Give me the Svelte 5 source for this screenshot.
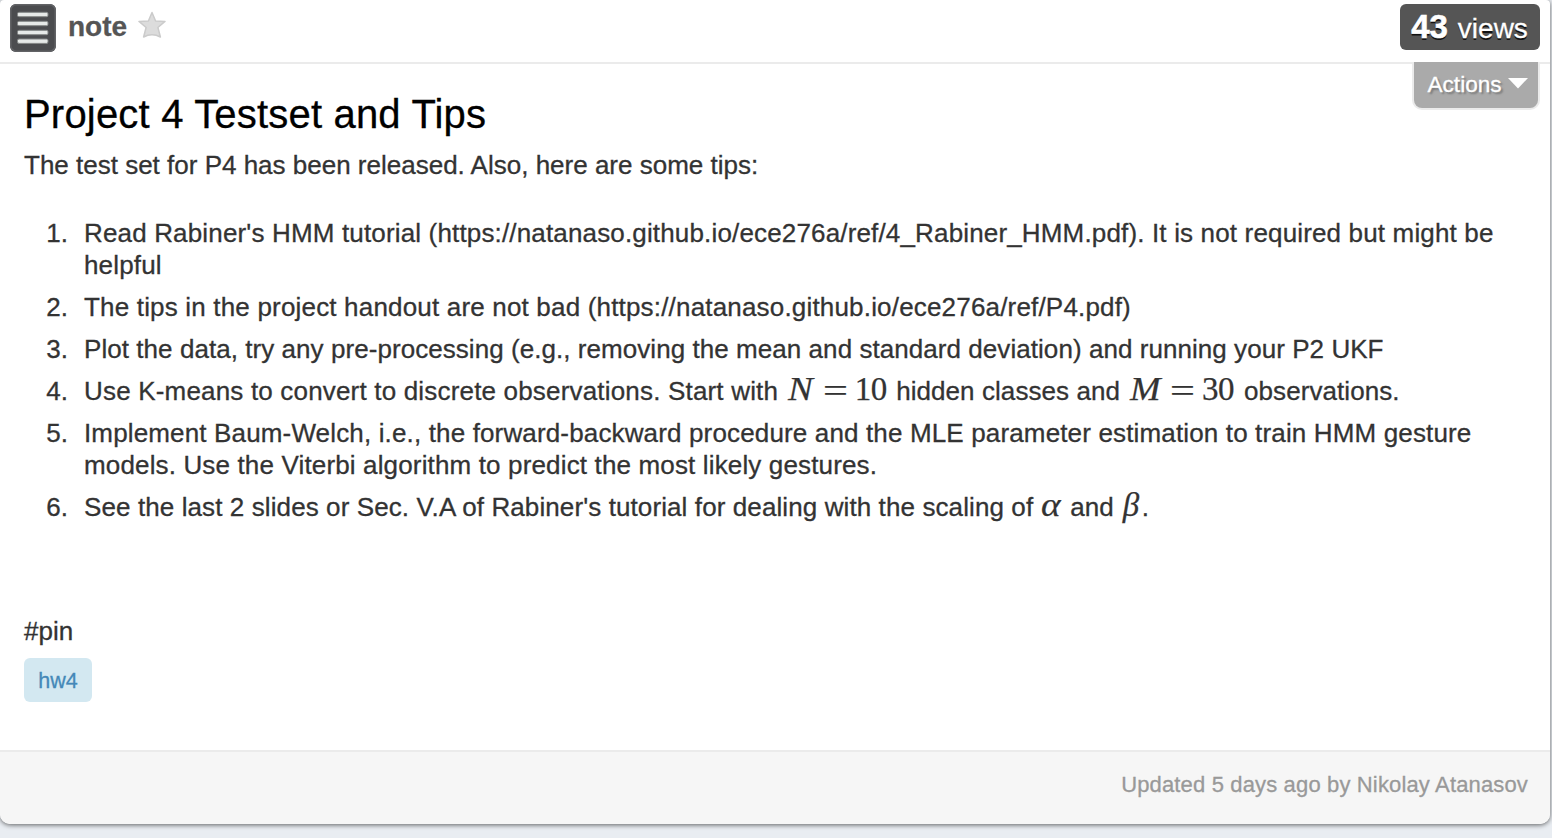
<script>
  const tips = [
    ["Read Rabiner's HMM tutorial (https://natanaso.github.io/ece276a/ref/4_Rabiner_HMM.pdf). It is not required but might be", 'helpful'],
    ['The tips in the project handout are not bad (https://natanaso.github.io/ece276a/ref/P4.pdf)'],
    ['Plot the data, try any pre-processing (e.g., removing the mean and standard deviation) and running your P2 UKF'],
    null,
    ['Implement Baum-Welch, i.e., the forward-backward procedure and the MLE parameter estimation to train HMM gesture', 'models. Use the Viterbi algorithm to predict the most likely gestures.'],
    null
  ];
</script>

<article class="card">
  <header>
    <svg class="note-icon" width="46" height="48" viewBox="0 0 46 48">
      <rect width="46" height="48" rx="6" fill="#4b4c4f" />
      <rect x=".75" y=".75" width="44.5" height="46.5" rx="5.5" fill="none" stroke="#626366" stroke-width="1.5" />
      <g fill="#e6e9e8" stroke="#838686" stroke-width="1">
        <rect x="7.5" y="8.3" width="30.5" height="4.4" rx="1.5" />
        <rect x="7.5" y="17.3" width="30.5" height="4.4" rx="1.5" />
        <rect x="7.5" y="26.3" width="30.5" height="4.4" rx="1.5" />
        <rect x="7.5" y="35" width="30.5" height="4.4" rx="1.5" />
      </g>
    </svg>
    <span class="kind">note</span>
    <svg class="star" width="28" height="28" viewBox="0 0 28 28">
      <path d="M14 1.5 17.6 10 27 10.4 19.9 16.5 22.4 26 Q14 21.5 5.6 26 L8.1 16.5 1 10.4 10.4 10Z" fill="#dcdcdc" stroke="#cbcbcb" stroke-width="1.5" stroke-linejoin="round" />
    </svg>
    <div class="views"><b>43</b><span>views</span></div>
  </header>

  <main>
    <button class="actions"><span>Actions</span><svg width="20" height="11" viewBox="0 0 20 11"><path d="M0 0H20L10 10.5Z" fill="#fff" /></svg></button>
    <h1>Project 4 Testset and Tips</h1>
    <p class="intro">The test set for P4 has been released. Also, here are some tips:</p>
    <ol>
      {#each tips as tip, i}
        <li class="t{i + 1}">
          <span class="num">{i + 1}.</span>
          <div>
            {#if i === 3}
              <span class="line"><span>Use K-means to convert to discrete observations. Start with</span><span class="math n"><i>N</i><em>=</em><span>10</span></span><span class="plain">hidden classes and</span><span class="math m"><i>M</i><em>=</em><span>30</span></span><span class="plain">observations.</span></span>
            {:else if i === 5}
              <span class="line"><span>See the last 2 slides or Sec. V.A of Rabiner's tutorial for dealing with the scaling of</span><span class="math a"><i>α</i></span><span class="plain">and</span><span class="math b"><i>β</i></span><span>.</span></span>
            {:else}
              {#each tip as line}<span class="line">{line}</span>{/each}
            {/if}
          </div>
        </li>
      {/each}
    </ol>
    <p class="pin">#pin</p>
    <span class="tag">hw4</span>
  </main>

  <footer>Updated 5 days ago by Nikolay Atanasov</footer>
</article>

<style>
  :global(body) {
    background: #e9edf2;
    height: 838px;
    overflow: hidden;
    font-family: "Liberation Sans", Arial, sans-serif;
    -webkit-text-stroke: .3px currentColor;
  }
  .card {
    box-sizing: border-box;
    width: 1550px;
    height: 824px;
    background: #fff;
    border-radius: 4px 4px 10px 10px;
    box-shadow: 0 1px 5px rgba(0, 0, 0, .6);
    display: flex;
    flex-direction: column;
    overflow: hidden;
    color: #333;
  }
  header {
    box-sizing: border-box;
    height: 64px;
    flex: none;
    border-bottom: 2px solid #ebebeb;
    display: flex;
    align-items: flex-start;
    padding: 4px 10px;
  }
  .kind {
    font-weight: 700;
    font-size: 28px;
    line-height: 32px;
    margin: 7px 0 0 12px;
    color: #555;
    letter-spacing: 0;
  }
  .star { margin: 7px 0 0 11px; }
  .views {
    margin-left: auto;
    box-sizing: border-box;
    width: 140px;
    height: 46px;
    border-radius: 6px;
    background: #555;
    color: #fff;
    display: flex;
    justify-content: center;
    align-items: baseline;
    gap: 10px;
    font-size: 28px;
    line-height: 46px;
    text-shadow: 0 2px 0 #111;
    white-space: nowrap;
    padding-right: 1px;
  }
  .views b { font-size: 33px; -webkit-text-stroke-width: .6px; }
  main {
    flex: none;
    height: 686px;
    padding: 0 24px;
    position: relative;
  }
  .actions {
    position: absolute;
    top: -2px;
    left: 1412px;
    box-sizing: border-box;
    width: 128px;
    height: 48px;
    border: 2px solid #ebebeb;
    border-top: 0;
    border-radius: 0 0 10px 10px;
    background: #aaa;
    color: #fff;
    font: 22.6px/44px "Liberation Sans", Arial, sans-serif;
    padding: 0 10px 1px 13.5px;
    display: flex;
    justify-content: space-between;
    align-items: center;
    text-shadow: 2px 2px 2px #777;
  }
  .actions svg { margin: 0 0 2px; }
  h1 {
    margin: 0;
    padding-top: 26px;
    font-weight: 400;
    font-size: 40px;
    line-height: 48px;
    color: #000;
    white-space: nowrap;
    letter-spacing: .19px;
  }
  p { margin: 0; font-size: 26px; line-height: 32px; }
  .intro { padding-top: 11px; }
  ol { list-style: none; margin: 36px 0 0; padding: 0; }
  li {
    display: flex;
    font-size: 26px;
    line-height: 32px;
    margin-bottom: 10px;
  }
  .t1 .line { letter-spacing: .157px; }
  .t2 .line { letter-spacing: .18px; }
  .t3 .line { letter-spacing: .055px; }
  .t4 .line { letter-spacing: .18px; }
  .t5 .line { letter-spacing: .148px; }
  .t6 .line { letter-spacing: .1px; }
  .line .plain { letter-spacing: .07px; }
  .num { width: 44px; margin-right: 16px; text-align: right; }
  .line { display: flex; align-items: baseline; white-space: pre; height: 32px; }
  .math {
    display: flex;
    align-items: baseline;
    box-sizing: border-box;
    font-family: "Liberation Serif", "Times New Roman", serif;
    font-size: 33px;
    line-height: 28px;
    height: 28px;
    letter-spacing: -.5px;
    -webkit-text-stroke-width: .25px;
  }
  .math i, .math em { display: block; transform-origin: 0 50%; }
  .math em { font-style: normal; transform: translateY(2px) scaleX(1.34); }
  .n, .m { justify-content: flex-start; }
  .n { width: 118px; padding-left: 9.5px; }
  .m { width: 124px; padding-left: 10px; }
  .n i { width: 35px; transform: scaleX(1.13); }
  .m i { width: 40px; transform: scaleX(1.11); }
  .n em, .m em { width: 32px; }
  .a { width: 37px; padding-left: 7.5px; }
  .b { width: 28px; padding-left: 9px; }
  .a i { transform: scaleX(1.13); }
  .pin { padding-top: 82px; }
  .tag {
    display: block;
    width: 68px;
    height: 44px;
    margin-top: 11px;
    border-radius: 6px;
    background: #d3e8f1;
    color: #4488b8;
    font-size: 21.5px;
    line-height: 46px;
    text-align: center;
  }
  footer {
    box-sizing: border-box;
    flex: 1;
    border-top: 2px solid #ebebeb;
    background: #f6f6f6;
    padding: 17px 22px 0;
    text-align: right;
    font-size: 22px;
    line-height: 32px;
    letter-spacing: .15px;
    color: #999;
  }
</style>
